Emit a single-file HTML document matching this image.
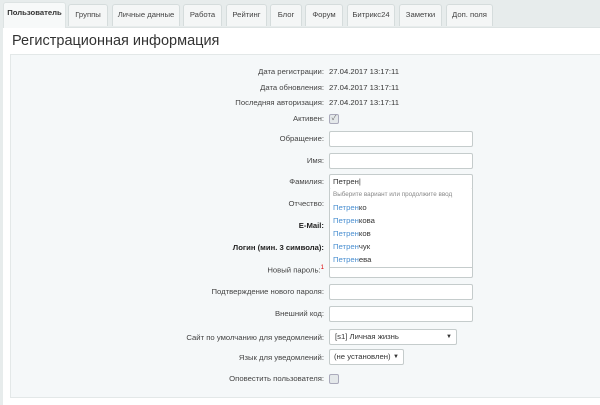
<!DOCTYPE html>
<html><head><meta charset="utf-8"><style>
*{margin:0;padding:0;box-sizing:border-box}
body{width:600px;height:405px;overflow:hidden;background:#e7ecec;font-family:"Liberation Sans","Noto Sans CJK SC",sans-serif;font-size:7.7px;color:#333;position:relative}
.tab{position:absolute;top:4px;height:22px;background:#f4f6f6;border:1px solid #d5dcdc;border-bottom:none;border-radius:3px 3px 0 0;font-size:7.7px;line-height:20px;text-align:center;color:#444}
.tab.a{top:2px;height:26px;background:#f7f9f9;font-weight:bold;color:#333;z-index:2;border-color:#dde3e3}
.panel{position:absolute;left:3px;top:27px;right:0;bottom:0;background:#fff;border-top:1px solid #dde3e3}
h1{position:absolute;left:12px;top:33px;font-size:14.5px;font-weight:normal;color:#333}
.box{position:absolute;left:10px;top:54px;right:0;height:344px;background:#f5f8f9;border-top:1px solid #e3e8e8;border-left:1px solid #e3e8e8;border-bottom:1px solid #e3e8e8}
.l{position:absolute;right:276px;font-size:7.7px;color:#444;white-space:nowrap;text-align:right}
.v{position:absolute;left:329px;font-size:7.7px;color:#333}
.in{position:absolute;left:329px;width:144px;height:16px;background:#fff;border:1px solid #c5cccc;border-radius:2px}
.cb{position:absolute;left:329px;width:10px;height:10px;border:1px solid #aab;border-radius:2px;background:#e4e8ea}
.sel{position:absolute;left:329px;height:16px;background:#fff;border:1px solid #c5cccc;border-radius:2px;font-size:7.7px;line-height:14px;padding-left:5px;color:#333;white-space:nowrap}
.sel span{position:absolute;right:4px;top:0;font-size:6px}
.dd{position:absolute;left:329px;top:189px;width:144px;height:79px;background:#fff;border:1px solid #c5cccc;border-top:none;z-index:5}
.dd div{position:absolute;left:3px;font-size:7.7px;color:#333}
.dd b{font-weight:normal;color:#4a8fd1}
</style></head><body>
<div class="panel"></div>
<div class="tab a" style="left:3px;width:63px">Пользователь</div>
<div class="tab" style="left:68px;width:40px">Группы</div>
<div class="tab" style="left:112px;width:68px">Личные данные</div>
<div class="tab" style="left:183px;width:39px">Работа</div>
<div class="tab" style="left:226px;width:41px">Рейтинг</div>
<div class="tab" style="left:270px;width:32px">Блог</div>
<div class="tab" style="left:305px;width:38px">Форум</div>
<div class="tab" style="left:347px;width:48px">Битрикс24</div>
<div class="tab" style="left:399px;width:43px">Заметки</div>
<div class="tab" style="left:446px;width:47px">Доп. поля</div>
<h1>Регистрационная информация</h1>
<div class="box"></div>

<div class="l" style="top:67px">Дата регистрации:</div><div class="v" style="top:67px">27.04.2017 13:17:11</div>
<div class="l" style="top:83px">Дата обновления:</div><div class="v" style="top:83px">27.04.2017 13:17:11</div>
<div class="l" style="top:98px">Последняя авторизация:</div><div class="v" style="top:98px">27.04.2017 13:17:11</div>
<div class="l" style="top:114px">Активен:</div><div class="cb" style="top:114px;font-size:7px;line-height:8px;text-align:center;color:#666">✓</div>
<div class="l" style="top:134px">Обращение:</div><div class="in" style="top:131px"></div>
<div class="l" style="top:156px">Имя:</div><div class="in" style="top:153px"></div>
<div class="l" style="top:177px">Фамилия:</div><div class="in" style="top:174px;height:16px;line-height:14px;padding-left:3px;font-size:7.7px">Петрен|</div>
<div class="l" style="top:199px">Отчество:</div><div class="in" style="top:196px"></div>
<div class="l" style="top:221px;font-weight:bold;color:#222">E-Mail:</div><div class="in" style="top:218px"></div>
<div class="l" style="top:243px;font-weight:bold;color:#222">Логин (мин. 3 символа):</div><div class="in" style="top:240px"></div>
<div class="l" style="top:265px">Новый пароль:<sup style="color:#d00;font-size:6px">1</sup></div><div class="in" style="top:262px"></div>
<div class="l" style="top:287px">Подтверждение нового пароля:</div><div class="in" style="top:284px"></div>
<div class="l" style="top:309px">Внешний код:</div><div class="in" style="top:306px"></div>
<div class="l" style="top:333px">Сайт по умолчанию для уведомлений:</div><div class="sel" style="top:329px;width:128px">[s1] Личная жизнь<span>▼</span></div>
<div class="l" style="top:353px">Язык для уведомлений:</div><div class="sel" style="top:349px;width:75px;padding-left:4px">(не установлен)<span>▼</span></div>
<div class="l" style="top:374px">Оповестить пользователя:</div><div class="cb" style="top:374px"></div>

<div class="dd">
<div style="top:2px;font-size:6.3px;color:#888">Выберите вариант или продолжите ввод</div>
<div style="top:14px"><b>Петрен</b>ко</div>
<div style="top:27px"><b>Петрен</b>кова</div>
<div style="top:40px"><b>Петрен</b>ков</div>
<div style="top:53px"><b>Петрен</b>чук</div>
<div style="top:66px"><b>Петрен</b>ева</div>
</div>
</body></html>
